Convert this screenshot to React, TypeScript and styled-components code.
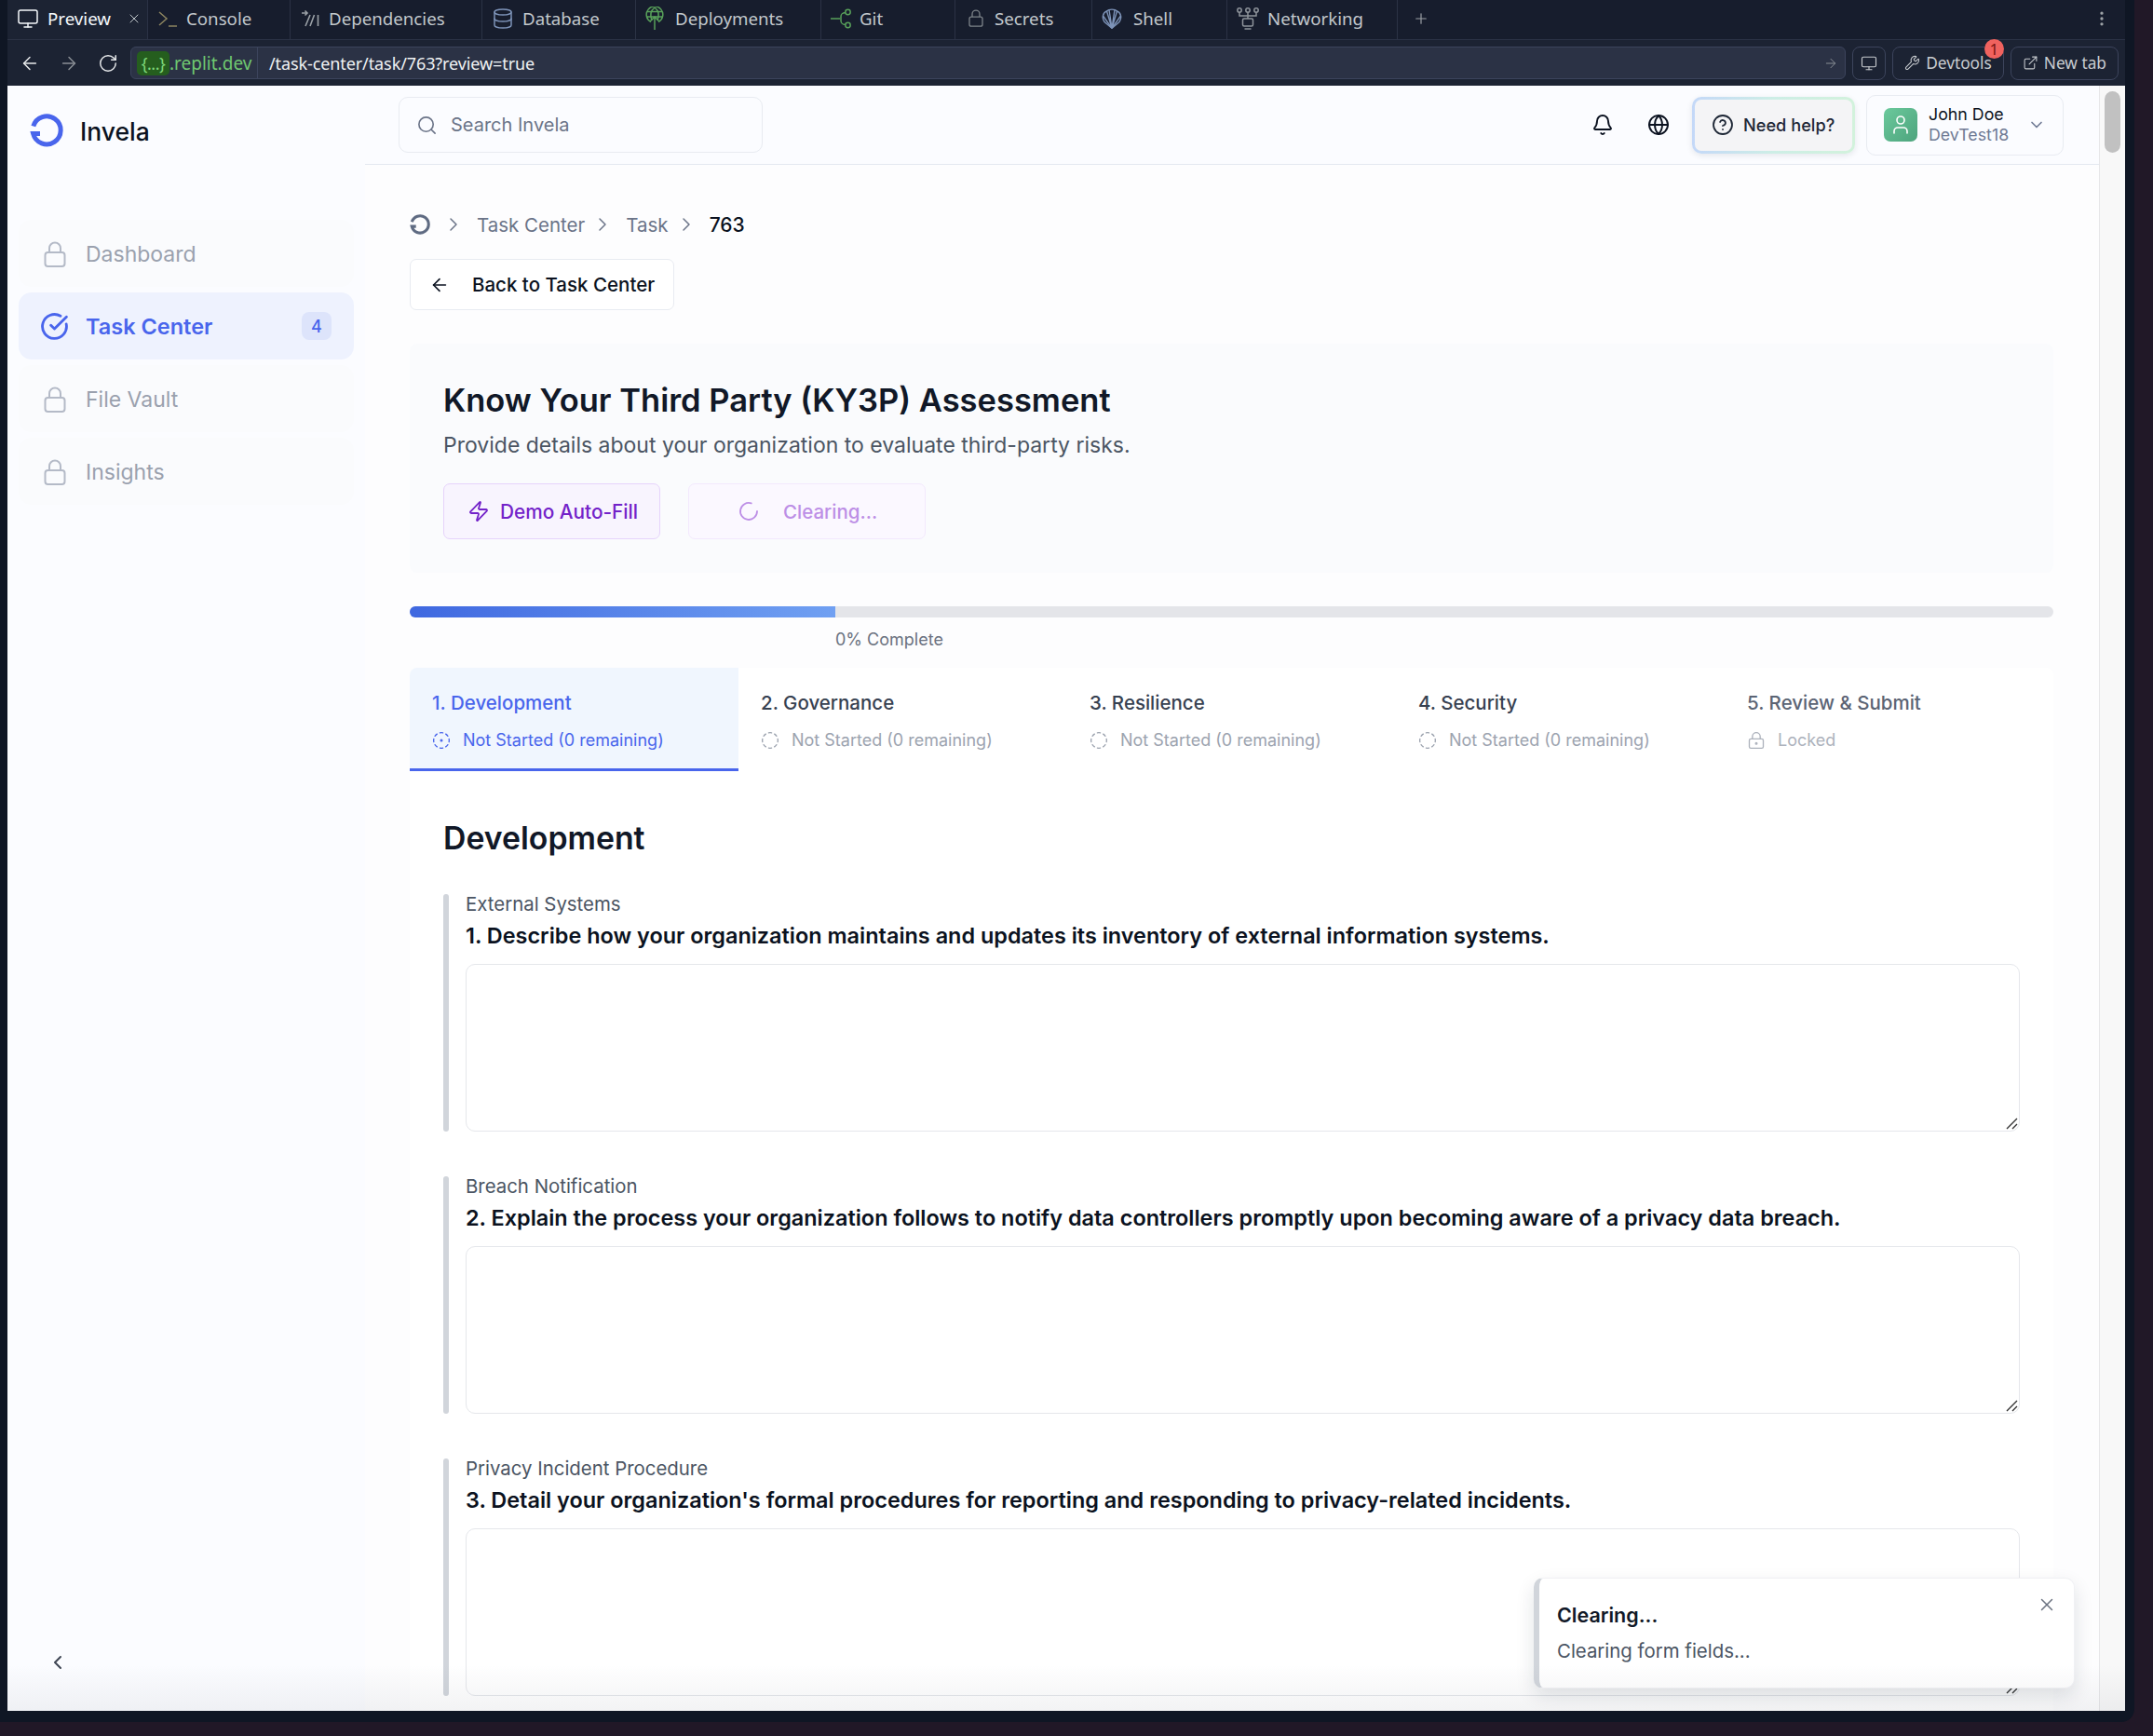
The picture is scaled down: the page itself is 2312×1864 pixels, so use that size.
import styled, { createGlobalStyle } from "styled-components";
import {
  ArrowLeft,
  ArrowRight,
  Bell,
  ChevronDown,
  ChevronLeft,
  ChevronRight,
  CircleCheckBig,
  CircleDashed,
  CircleDotDashed,
  CircleHelp,
  Database,
  ExternalLink,
  Globe,
  LoaderCircle,
  LockKeyhole,
  Monitor,
  MoreVertical,
  Plus,
  RotateCw,
  Search,
  User,
  Wrench,
  X,
  Zap,
} from "lucide-react";

const GlobalStyle = createGlobalStyle`
  html, body { margin: 0; padding: 0; background: #211827; }
  * { box-sizing: border-box; }
  body { font-family: Inter, "Liberation Sans", sans-serif; }
`;

const CHROME_FONT = `"Noto Sans", Roboto, sans-serif`;

const Root = styled.div`
  width: 2312px;
  height: 1864px;
  background: #211827;
  overflow: hidden;
`;

const Frame = styled.div`
  width: 2292px;
  height: 1849px;
  padding-bottom: 12px;
  background: #0f1624;
  border-bottom-right-radius: 14px;
  display: flex;
  flex-direction: column;
`;

const TabBar = styled.div`
  height: 43px;
  flex-shrink: 0;
  margin-left: 8px;
  margin-right: 10px;
  background: #171d2d;
  border-bottom: 1px solid #2b3245;
  display: flex;
  align-items: center;
  font-family: ${CHROME_FONT};
`;

const Tab = styled.div<{ $width: number; $active?: boolean }>`
  width: ${(p) => p.$width}px;
  height: 42px;
  padding: 0 0 3px 10px;
  display: flex;
  align-items: center;
  gap: 9px;
  flex-shrink: 0;
  font-size: 18.7px;
  color: ${(p) => (p.$active ? "#f5f9fc" : "#c2c8cc")};
  background: ${(p) => (p.$active ? "#1c2333" : "transparent")};
  border-right: 1px solid #2b3245;
  position: relative;
`;

const TabLock = styled.span`
  display: flex;
  margin: 0 3px 0 4px;
`;

const TabClose = styled.span`
  margin-left: auto;
  margin-right: 6px;
  display: flex;
  color: #c2c8cc;
`;

const TabPlus = styled.div`
  margin-left: 16px;
  padding-bottom: 3px;
  display: flex;
  color: #9da2a6;
`;

const TabMenu = styled.div`
  margin-left: auto;
  margin-right: 15px;
  padding-bottom: 3px;
  display: flex;
  color: #9da2a6;
`;

const AddressBar = styled.div`
  height: 49px;
  flex-shrink: 0;
  margin-left: 8px;
  margin-right: 10px;
  background: #1c2333;
  display: flex;
  align-items: center;
  padding: 0 7px 0 3px;
  font-family: ${CHROME_FONT};
`;

const NavIcon = styled.div<{ $dim?: boolean }>`
  width: 42px;
  display: flex;
  justify-content: center;
  flex-shrink: 0;
  color: ${(p) => (p.$dim ? "#8a8f96" : "#e8eaec")};
`;

const UrlField = styled.div`
  flex: 1;
  margin-left: 3px;
  height: 35px;
  background: #2b3245;
  border: 1px solid #3c445c;
  border-radius: 6px;
  display: flex;
  align-items: center;
  padding-left: 6px;
  padding-right: 7px;
  font-size: 18px;
`;

const HostPill = styled.span`
  background: #255e1e;
  color: #7fd77a;
  border-radius: 5px;
  height: 26px;
  width: 35px;
  display: flex;
  align-items: center;
  justify-content: center;
  font-size: 18px;
  letter-spacing: -0.5px;
`;

const HostText = styled.span`
  color: #6fc870;
  font-size: 19px;
  width: 95px;
  height: 33px;
  display: flex;
  align-items: center;
  border-right: 1px solid #3c445c;
`;

const PathText = styled.span`
  color: #f0f2f4;
  padding-left: 12px;
  letter-spacing: -0.1px;
`;

const GoIcon = styled.span`
  margin-left: auto;
  display: flex;
  color: #8a8f96;
`;

const ChromeButton = styled.div<{ $icon?: boolean }>`
  height: 36px;
  margin-left: 7px;
  padding: 0 ${(p) => (p.$icon ? 8 : 12)}px;
  border: 1px solid #3c445c;
  border-radius: 8px;
  display: flex;
  align-items: center;
  gap: 6px;
  color: #c8ccd0;
  font-size: 17.3px;
  position: relative;
  flex-shrink: 0;
`;

const ErrorBadge = styled.span`
  position: absolute;
  top: -9px;
  right: -1px;
  width: 21px;
  height: 21px;
  border-radius: 50%;
  background: #f0625e;
  color: #7a1512;
  font-size: 17px;
  line-height: 21px;
  text-align: center;
`;

const Page = styled.div`
  flex: 1;
  min-height: 0;
  margin-left: 8px;
  margin-right: 10px;
  display: flex;
  background: #fbfcff;
  position: relative;
  overflow: hidden;

  &::after {
    content: "";
    position: absolute;
    left: 0;
    right: 0;
    bottom: 0;
    height: 50px;
    background: linear-gradient(to bottom, rgba(30, 40, 60, 0), rgba(30, 40, 60, 0.055));
    pointer-events: none;
    z-index: 3;
  }
`;

const Sidebar = styled.aside`
  width: 384px;
  flex-shrink: 0;
  padding: 0 12px;
  display: flex;
  flex-direction: column;
`;

const Brand = styled.div`
  height: 144px;
  padding: 30px 0 0 12px;
  display: flex;
  align-items: flex-start;
  gap: 18px;
`;

const BrandName = styled.span`
  font-size: 26.5px;
  line-height: 38px;
  font-weight: 500;
  color: #0b1220;
`;

const NavItem = styled.div<{ $active?: boolean }>`
  height: 72px;
  margin-bottom: 6px;
  border-radius: 14px;
  padding: ${(p) => (p.$active ? 0 : 2)}px 24px 0 ${(p) => (p.$active ? 23 : 27)}px;
  display: flex;
  align-items: center;
  gap: ${(p) => (p.$active ? 18 : 21)}px;
  font-size: ${(p) => (p.$active ? 23.5 : 23)}px;
  font-weight: ${(p) => (p.$active ? 600 : 400)};
  color: ${(p) => (p.$active ? "#4965ec" : "#9aa1ae")};
  background: ${(p) => (p.$active ? "#eef2fe" : "#fafbfd")};
`;

const NavBadge = styled.span`
  margin-left: auto;
  width: 32px;
  height: 30px;
  border-radius: 8px;
  background: #dde4fb;
  color: #4965ec;
  font-size: 18px;
  font-weight: 500;
  display: flex;
  align-items: center;
  justify-content: center;
`;

const Collapse = styled.div`
  margin-top: auto;
  margin-bottom: 40px;
  padding-left: 30px;
  display: flex;
  color: #3f4654;
`;

const Main = styled.main`
  flex: 1;
  min-width: 0;
  background: #fdfdfe;
  display: flex;
  flex-direction: column;
`;

const TopBar = styled.header`
  height: 85px;
  flex-shrink: 0;
  background: #fbfcff;
  border-bottom: 1px solid #e4e8f0;
  padding: 0 38px 0 36px;
  display: flex;
  align-items: center;
`;

const SearchBox = styled.div`
  width: 391px;
  height: 60px;
  border: 1px solid #e8ebf1;
  border-radius: 10px;
  padding-left: 18px;
  display: flex;
  align-items: center;
  gap: 14px;
  color: #6b7488;
  font-size: 20px;
`;

const TopIcon = styled.div`
  display: flex;
  width: 60px;
  justify-content: center;
  color: #0b1220;
`;

const TopIcons = styled.div`
  margin-left: auto;
  margin-right: 6px;
  display: flex;
`;

const HelpFrame = styled.div`
  width: 175px;
  height: 61px;
  padding: 3px;
  border-radius: 10px;
  background: linear-gradient(90deg, #c4d8f8, #cdeee6, #d2f2dc);
  box-shadow: 0 2px 6px rgba(30, 40, 60, 0.1);
`;

const HelpInner = styled.div`
  height: 100%;
  border-radius: 7px;
  background: #f4f4f6;
  display: flex;
  align-items: center;
  padding-left: 18px;
  gap: 10px;
  font-size: 18.2px;
  font-weight: 500;
  color: #1e2736;
`;

const UserCard = styled.div`
  width: 212px;
  height: 65px;
  margin-left: 12px;
  border: 1px solid #e8ebf1;
  border-radius: 10px;
  padding-left: 18px;
  display: flex;
  align-items: center;
  gap: 12px;
`;

const Avatar = styled.div`
  width: 36px;
  height: 36px;
  border-radius: 7px;
  background: linear-gradient(135deg, #6bc99c, #4da47d);
  display: flex;
  align-items: center;
  justify-content: center;
  color: #fff;
`;

const UserText = styled.div`
  display: flex;
  flex-direction: column;
  font-size: 17.8px;
  line-height: 22px;
`;

const UserName = styled.span`
  color: #0b1220;
  font-weight: 400;
`;

const UserSub = styled.span`
  color: #6f7a94;
`;

const UserChevron = styled.span`
  margin-left: auto;
  margin-right: 18px;
  display: flex;
  color: #6f7a94;
`;

const Body = styled.div`
  flex: 1;
  min-height: 0;
  padding: 0 49px 0 48px;
  display: flex;
  flex-direction: column;
`;

const Crumbs = styled.nav`
  height: 34px;
  margin-top: 47px;
  display: flex;
  align-items: center;
  font-size: 20.5px;
  color: #6b7488;
  flex-shrink: 0;
`;

const CrumbLogo = styled.span`
  display: flex;
  margin-right: 6px;
`;

const CrumbSep = styled.span`
  display: flex;
  color: #6b7488;
  margin: 0 13px 0 7px;
`;

const CrumbCurrent = styled.span`
  color: #0b1220;
  font-size: 21px;
  font-weight: 500;
`;

const BackButton = styled.div`
  width: 284px;
  height: 55px;
  margin-top: 20px;
  flex-shrink: 0;
  background: #fff;
  border: 1px solid #e8ebf1;
  border-radius: 7px;
  padding-left: 20px;
  display: flex;
  align-items: center;
  gap: 24px;
  font-size: 20.5px;
  font-weight: 500;
  color: #0b1220;
`;

const HeaderCard = styled.section`
  margin-top: 36px;
  height: 246px;
  flex-shrink: 0;
  padding: 39px 36px 0;
  background: #fafbfd;
  border-radius: 8px;
`;

const Title = styled.h1`
  margin: 0;
  font-size: 34.5px;
  line-height: 44px;
  font-weight: 600;
  color: #111827;
`;

const Subtitle = styled.p`
  margin: 11px 0 0;
  font-size: 23px;
  line-height: 30px;
  color: #4b5563;
`;

const ActionRow = styled.div`
  margin-top: 26px;
  display: flex;
  gap: 30px;
`;

const ActionButton = styled.div<{ $busy?: boolean }>`
  width: ${(p) => (p.$busy ? 255 : 233)}px;
  height: 60px;
  border-radius: 7px;
  border: 1px solid ${(p) => (p.$busy ? "#f3e9fd" : "#e6d3fb")};
  background: ${(p) => (p.$busy ? "#fbf8ff" : "#f8f4fe")};
  color: ${(p) => (p.$busy ? "#bd8fe6" : "#7322c9")};
  padding-left: ${(p) => (p.$busy ? 52 : 25)}px;
  display: flex;
  align-items: center;
  gap: ${(p) => (p.$busy ? 25 : 11)}px;
  font-size: ${(p) => (p.$busy ? 20.5 : 20.8)}px;
  font-weight: 500;
`;

const ProgressTrack = styled.div`
  margin-top: 36px;
  height: 12px;
  flex-shrink: 0;
  background: #e4e5e9;
  border-radius: 6px;
  overflow: hidden;
`;

const ProgressFill = styled.div`
  height: 100%;
  background: linear-gradient(90deg, #3f68e0, #70a0f2);
`;

const ProgressLabel = styled.div`
  height: 54px;
  flex-shrink: 0;
  padding-top: 12px;
  font-size: 18px;
  line-height: 24px;
  color: #6b7280;
`;

const FormCard = styled.section`
  flex: 1;
  min-height: 0;
  background: #fff;
  border-radius: 8px 8px 0 0;
  display: flex;
  flex-direction: column;
`;

const StepRow = styled.div`
  display: grid;
  grid-template-columns: repeat(5, 1fr);
  height: 111px;
  flex-shrink: 0;
`;

const Step = styled.div<{ $active?: boolean }>`
  padding: 24px 24px 0;
  background: ${(p) => (p.$active ? "#f0f6fe" : "transparent")};
  border-bottom: 3px solid ${(p) => (p.$active ? "#4965ec" : "transparent")};
  border-radius: ${(p) => (p.$active ? "8px 0 0 0" : "0")};
`;

const StepTitle = styled.div<{ $tone: "active" | "normal" | "muted" }>`
  font-size: 20.5px;
  line-height: 28px;
  font-weight: 500;
  color: ${(p) =>
    p.$tone === "active" ? "#4965ec" : p.$tone === "normal" ? "#374151" : "#5b6474"};
`;

const StepStatus = styled.div<{ $tone: "active" | "normal" | "muted" }>`
  margin-top: 14px;
  display: flex;
  align-items: center;
  gap: 13px;
  font-size: 18px;
  line-height: 24px;
  color: ${(p) =>
    p.$tone === "active" ? "#4965ec" : p.$tone === "normal" ? "#9ca3af" : "#adb2bc"};
`;

const FormBody = styled.div`
  flex: 1;
  padding: 0 36px;
`;

const SectionTitle = styled.h2`
  margin: 0;
  padding-top: 50px;
  height: 132px;
  font-size: 33.8px;
  line-height: 44px;
  font-weight: 600;
  color: #111827;
`;

const Question = styled.div`
  height: 255px;
  margin-bottom: 48px;
  padding-left: 24px;
  position: relative;
  display: flex;
  flex-direction: column;

  &::before {
    content: "";
    position: absolute;
    left: 0;
    top: 0;
    bottom: 0;
    width: 6px;
    border-radius: 3px;
    background: #d1d5db;
  }
`;

const QuestionLabel = styled.div`
  font-size: 20.4px;
  line-height: 22px;
  color: #4b5563;
`;

const QuestionText = styled.div`
  margin-top: 8px;
  font-size: 23.45px;
  line-height: 30px;
  font-weight: 600;
  color: #0b1220;
`;

const AnswerBox = styled.div`
  margin-top: 15px;
  flex: 1;
  position: relative;
  display: flex;
`;

const Answer = styled.textarea`
  flex: 1;
  display: block;
  border: 1px solid #e5e7eb;
  border-radius: 10px;
  background: #fff;
  resize: none;
  outline: none;
`;

const ResizeGrip = styled.svg`
  position: absolute;
  right: 2px;
  bottom: 2px;
`;

const Toast = styled.div`
  position: absolute;
  left: 1639px;
  top: 1602px;
  width: 581px;
  height: 119px;
  z-index: 2;
  background: #fff;
  border: 1px solid #f0f1f4;
  border-left: 6px solid #d1d5db;
  border-radius: 10px;
  padding: 25px 19px 0;
  box-shadow: 0 8px 20px rgba(20, 30, 50, 0.12);
`;

const ToastTitle = styled.div`
  font-size: 21.5px;
  line-height: 28px;
  font-weight: 600;
  color: #111827;
`;

const ToastText = styled.div`
  margin-top: 11px;
  font-size: 20.4px;
  line-height: 28px;
  color: #4b5563;
`;

const ToastClose = styled.span`
  position: absolute;
  right: 18px;
  top: 17px;
  display: flex;
  color: #6b7280;
`;

const ScrollRail = styled.div`
  width: 28px;
  flex-shrink: 0;
  background: #f8f8f8;
  border-left: 1px solid #e6e6e8;
  padding: 6px 0 0 5px;
`;

const ScrollThumb = styled.div`
  width: 17px;
  height: 66px;
  border-radius: 9px;
  background: #c1c1c1;
`;

// Invela ring, also used greyed out in the breadcrumb
const LogoMark = ({ size, color, weight }: { size: number; color: string; weight: number }) => (
  <svg width={size} height={size} viewBox="0 0 36 36" fill="none">
    <path
      d="M3.8 13.5 A15 15 0 1 1 3.6 21.5 H11"
      stroke={color}
      strokeWidth={weight}
      strokeLinejoin="miter"
    />
  </svg>
);

// narrow shackle over a wide body, lucide's lock is too squat for this one
const Padlock = ({ width, height, color }: { width: number; height: number; color: string }) => (
  <svg width={width} height={height} viewBox="0 0 24 28" fill="none" stroke={color} strokeWidth="2">
    <rect x="1.500" y="12" width="21" height="15" rx="3" />
    <path d="M6 12V7.500a6 6 0 0 1 12 0V12" />
  </svg>
);

const ConsoleGlyph = () => (
  <svg width="22" height="24" viewBox="0 0 22 24" fill="none" stroke="#8d8560" strokeWidth="1.5">
    <path d="M2 5l8 7-8 7" />
    <path d="M12 20h9" />
  </svg>
);

const DependenciesGlyph = () => (
  <svg width="22" height="24" viewBox="0 0 22 24" fill="none" stroke="#9aa0a6" strokeWidth="1.6">
    <path d="M2 6h6M5.500 3.500L8 6l-2.500 2.500" />
    <path d="M11 8L6 20M15.500 8L11 20M19.500 8v12" />
  </svg>
);

const DeploymentsGlyph = () => (
  <svg width="23" height="25" viewBox="0 0 23 25" fill="none" stroke="#58a05a" strokeWidth="1.5">
    <path d="M6 16.500a8.800 8.800 0 1 1 8 0" />
    <path d="M2 5.500h16M1.300 11h17.400M10 1c-5 4-5 9-3 14M10 1c5 4 5 9 3 14" />
    <path d="M10 25V11M5.500 15.500L10 11l4.500 4.500" />
  </svg>
);

const GitGlyph = () => (
  <svg width="22" height="22" viewBox="0 0 22 22" fill="none" stroke="#58a05a" strokeWidth="1.500">
    <circle cx="18.500" cy="4" r="2.700" />
    <circle cx="18.500" cy="18" r="2.700" />
    <path d="M0 11h10M16 4.500c-4 .5-5 1.500-5 4.500v4c0 3 1 4 5 4.500" />
  </svg>
);

const ShellGlyph = () => (
  <svg width="25" height="22" viewBox="0 0 25 22" fill="none" stroke="#7d93b8" strokeWidth="1.400">
    <path d="M11 21.300L3 14.500C-.5 9.500 2 4 5.500 3c2-2.500 9-2.500 11 0 3.500 1 6 6.500 2.500 11.500z" />
    <path d="M11 21.300L5.500 3M11 21.300L8 1.500M11 21.300L14 1.500M11 21.300L16.500 3M11 21.300L1.500 8M11 21.300L20.500 8" />
  </svg>
);

const NetworkingGlyph = () => (
  <svg width="24" height="24" viewBox="0 0 24 24" fill="none" stroke="#8e949b" strokeWidth="1.500">
    <circle cx="3" cy="3" r="2.200" />
    <circle cx="12" cy="3" r="2.200" />
    <circle cx="21" cy="3" r="2.200" />
    <path d="M3 5.200V9h18V5.200M12 5.200V12" />
    <rect x="6.500" y="12" width="11" height="8" rx="1.500" />
    <path d="M8.500 23h7" />
  </svg>
);

const Steps = [
  { title: "1. Development", status: "Not Started (0 remaining)", tone: "active" as const },
  { title: "2. Governance", status: "Not Started (0 remaining)", tone: "normal" as const },
  { title: "3. Resilience", status: "Not Started (0 remaining)", tone: "normal" as const },
  { title: "4. Security", status: "Not Started (0 remaining)", tone: "normal" as const },
  { title: "5. Review & Submit", status: "Locked", tone: "muted" as const },
];

const Questions = [
  {
    label: "External Systems",
    text: "1. Describe how your organization maintains and updates its inventory of external information systems.",
  },
  {
    label: "Breach Notification",
    text: "2. Explain the process your organization follows to notify data controllers promptly upon becoming aware of a privacy data breach.",
  },
  {
    label: "Privacy Incident Procedure",
    text: "3. Detail your organization's formal procedures for reporting and responding to privacy-related incidents.",
  },
];

const StepIcon = ({ tone }: { tone: "active" | "normal" | "muted" }) => {
  if (tone === "active") return <CircleDotDashed size={20} strokeWidth={1.6} />;
  if (tone === "muted") return <LockKeyhole size={20} strokeWidth={1.6} />;
  return <CircleDashed size={20} strokeWidth={1.6} />;
};

export default function App() {
  return (
    <Root>
      <GlobalStyle />
      <Frame>
        <TabBar>
          <Tab $width={151} $active>
            <Monitor size={24} strokeWidth={1.5} />
            Preview
            <TabClose>
              <X size={16} strokeWidth={1.5} />
            </TabClose>
          </Tab>
          <Tab $width={153}>
            <ConsoleGlyph />
            Console
          </Tab>
          <Tab $width={206}>
            <DependenciesGlyph />
            Dependencies
          </Tab>
          <Tab $width={165}>
            <Database size={24} strokeWidth={1.5} color="#7d93b8" />
            Database
          </Tab>
          <Tab $width={199}>
            <DeploymentsGlyph />
            Deployments
          </Tab>
          <Tab $width={144}>
            <GitGlyph />
            Git
          </Tab>
          <Tab $width={147}>
            <TabLock>
              <Padlock width={16} height={23} color="#7c8288" />
            </TabLock>
            Secrets
          </Tab>
          <Tab $width={145}>
            <ShellGlyph />
            Shell
          </Tab>
          <Tab $width={183}>
            <NetworkingGlyph />
            Networking
          </Tab>
          <TabPlus>
            <Plus size={18} strokeWidth={1.6} />
          </TabPlus>
          <TabMenu>
            <MoreVertical size={20} strokeWidth={2} />
          </TabMenu>
        </TabBar>

        <AddressBar>
          <NavIcon>
            <ArrowLeft size={22} strokeWidth={1.6} />
          </NavIcon>
          <NavIcon $dim>
            <ArrowRight size={22} strokeWidth={1.6} />
          </NavIcon>
          <NavIcon>
            <RotateCw size={22} strokeWidth={1.6} />
          </NavIcon>
          <UrlField>
            <HostPill>{"{...}"}</HostPill>
            <HostText>.replit.dev</HostText>
            <PathText>/task-center/task/763?review=true</PathText>
            <GoIcon>
              <ArrowRight size={16} strokeWidth={1.5} />
            </GoIcon>
          </UrlField>
          <ChromeButton $icon>
            <Monitor size={18} strokeWidth={1.5} />
          </ChromeButton>
          <ChromeButton>
            <Wrench size={17} strokeWidth={1.5} />
            Devtools
            <ErrorBadge>1</ErrorBadge>
          </ChromeButton>
          <ChromeButton>
            <ExternalLink size={17} strokeWidth={1.5} />
            New tab
          </ChromeButton>
        </AddressBar>

        <Page>
          <Sidebar>
            <Brand>
              <LogoMark size={36} color="#4965ec" weight={5} />
              <BrandName>Invela</BrandName>
            </Brand>
            <NavItem>
              <Padlock width={24} height={28} color="#b4bac7" />
              Dashboard
            </NavItem>
            <NavItem $active>
              <CircleCheckBig size={31} strokeWidth={2.2} />
              Task Center
              <NavBadge>4</NavBadge>
            </NavItem>
            <NavItem>
              <Padlock width={24} height={28} color="#b4bac7" />
              File Vault
            </NavItem>
            <NavItem>
              <Padlock width={24} height={28} color="#b4bac7" />
              Insights
            </NavItem>
            <Collapse>
              <ChevronLeft size={24} strokeWidth={2} />
            </Collapse>
          </Sidebar>

          <Main>
            <TopBar>
              <SearchBox>
                <Search size={23} strokeWidth={1.7} />
                Search Invela
              </SearchBox>
              <TopIcons>
                <TopIcon>
                  <Bell size={24} strokeWidth={1.9} />
                </TopIcon>
                <TopIcon>
                  <Globe size={24} strokeWidth={1.9} />
                </TopIcon>
              </TopIcons>
              <HelpFrame>
                <HelpInner>
                  <CircleHelp size={24} strokeWidth={1.8} />
                  Need help?
                </HelpInner>
              </HelpFrame>
              <UserCard>
                <Avatar>
                  <User size={24} strokeWidth={1.6} />
                </Avatar>
                <UserText>
                  <UserName>John Doe</UserName>
                  <UserSub>DevTest18</UserSub>
                </UserText>
                <UserChevron>
                  <ChevronDown size={20} strokeWidth={2} />
                </UserChevron>
              </UserCard>
            </TopBar>

            <Body>
              <Crumbs>
                <CrumbLogo>
                  <LogoMark size={22} color="#5f6b82" weight={5} />
                </CrumbLogo>
                <CrumbSep>
                  <ChevronRight size={24} strokeWidth={1.5} />
                </CrumbSep>
                Task Center
                <CrumbSep>
                  <ChevronRight size={24} strokeWidth={1.5} />
                </CrumbSep>
                Task
                <CrumbSep>
                  <ChevronRight size={24} strokeWidth={1.5} />
                </CrumbSep>
                <CrumbCurrent>763</CrumbCurrent>
              </Crumbs>
              <BackButton>
                <ArrowLeft size={22} strokeWidth={1.8} />
                Back to Task Center
              </BackButton>

              <HeaderCard>
                <Title>Know Your Third Party (KY3P) Assessment</Title>
                <Subtitle>Provide details about your organization to evaluate third-party risks.</Subtitle>
                <ActionRow>
                  <ActionButton>
                    <Zap size={24} strokeWidth={1.8} />
                    Demo Auto-Fill
                  </ActionButton>
                  <ActionButton $busy>
                    <LoaderCircle size={24} strokeWidth={1.8} />
                    Clearing...
                  </ActionButton>
                </ActionRow>
              </HeaderCard>

              <ProgressTrack>
                <ProgressFill style={{ width: `${(457 / 1765) * 100}%` }} />
              </ProgressTrack>
              <ProgressLabel style={{ paddingLeft: `${(457 / 1765) * 100}%` }}>0% Complete</ProgressLabel>

              <FormCard>
                <StepRow>
                  {Steps.map((step, i) => (
                    <Step key={step.title} $active={i === 0}>
                      <StepTitle $tone={step.tone}>{step.title}</StepTitle>
                      <StepStatus $tone={step.tone}>
                        <StepIcon tone={step.tone} />
                        {step.status}
                      </StepStatus>
                    </Step>
                  ))}
                </StepRow>
                <FormBody>
                  <SectionTitle>Development</SectionTitle>
                  {Questions.map((q) => (
                    <Question key={q.label}>
                      <QuestionLabel>{q.label}</QuestionLabel>
                      <QuestionText>{q.text}</QuestionText>
                      <AnswerBox>
                        <Answer />
                        <ResizeGrip width="14" height="14" viewBox="0 0 14 14" fill="none" stroke="#333" strokeWidth="1.4">
                          <path d="M2 13L13 2M8 13l5-5" />
                        </ResizeGrip>
                      </AnswerBox>
                    </Question>
                  ))}
                </FormBody>
              </FormCard>
            </Body>
          </Main>

          <ScrollRail>
            <ScrollThumb />
          </ScrollRail>

          <Toast>
            <ToastTitle>Clearing...</ToastTitle>
            <ToastText>Clearing form fields...</ToastText>
            <ToastClose>
              <X size={22} strokeWidth={1.6} />
            </ToastClose>
          </Toast>
        </Page>
      </Frame>
    </Root>
  );
}
